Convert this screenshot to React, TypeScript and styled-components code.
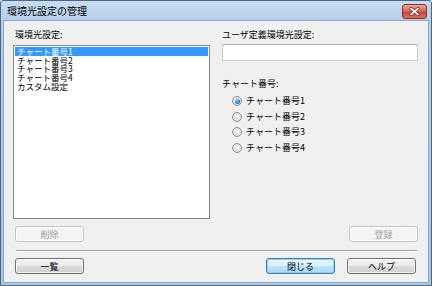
import React from "react";
import styled, { createGlobalStyle } from "styled-components";

const Global = createGlobalStyle`
  html, body { margin: 0; padding: 0; background: #fff; }
  body { font-family: "Noto Sans CJK JP", "Noto Sans", sans-serif; }
  * { box-sizing: border-box; }
`;

const Window = styled.div`
  width: 432px;
  height: 286px;
  display: flex;
  flex-direction: column;
  border: 1px solid #4d6688;
  border-radius: 3px 3px 0 0;
  background: linear-gradient(#c9dcf1, #b4cde9 20px, #a9c6e6);
  padding: 0 2px 2px;
`;

const TitleBar = styled.div`
  height: 19px;
  display: flex;
  align-items: center;
  justify-content: space-between;
  padding: 0 2px 0 4px;
`;

const Title = styled.div`
  font-size: 10px;
  line-height: 12px;
  color: #000;
`;

const CloseBtn = styled.div`
  width: 25px;
  height: 15px;
  margin-top: 1px;
  border: 1px solid #8a2f25;
  border-radius: 3px;
  background: linear-gradient(#e9a99c, #d5634f 50%, #c64330 51%, #d8705c);
  display: flex;
  align-items: center;
  justify-content: center;
`;

const Body = styled.div`
  flex: 1;
  display: flex;
  flex-direction: column;
  background: #f0f0f0;
  border: 1px solid #8aa8c8;
  padding: 8px 10px 8px 9px;
  font-size: 9px;
  color: #000;
`;

const Columns = styled.div`
  flex: 1;
  display: grid;
  grid-template-columns: 197px 196px;
  column-gap: 12px;
`;

const Column = styled.div`
  display: flex;
  flex-direction: column;
  min-height: 0;
`;

const Label = styled.div<{ $indent?: number }>`
  line-height: 12px;
  height: 12px;
  padding-left: ${(p) => p.$indent ?? 2}px;
  white-space: nowrap;
`;

const ListBox = styled.div`
  flex: 1;
  margin-top: 4px;
  background: #fff;
  border: 1px solid #828790;
  padding: 1px;
`;

const ListItem = styled.div<{ $selected?: boolean }>`
  height: 8.7px;
  line-height: 8.7px;
  font-size: 8.5px;
  padding-left: 2px;
  white-space: nowrap;
  background: ${(p) => (p.$selected ? "#3399ff" : "transparent")};
  color: ${(p) => (p.$selected ? "#fff" : "#000")};
`;

const TextInput = styled.div`
  margin-top: 3px;
  height: 17px;
  background: #fff;
  border: 1px solid #c9cdd3;
  border-top-color: #abadb3;
`;

const GroupLabel = styled(Label)`
  margin-top: 17px;
`;

const RadioList = styled.div`
  display: flex;
  flex-direction: column;
  gap: 5.5px;
  margin-top: 6px;
  padding-left: 10px;
`;

const RadioRow = styled.div`
  display: flex;
  align-items: center;
  gap: 4px;
  height: 10px;
  line-height: 10px;
  white-space: nowrap;
`;

const RadioCircle = styled.span<{ $checked?: boolean }>`
  width: 10px;
  height: 10px;
  border-radius: 50%;
  border: 1px solid #8e8f8f;
  background: radial-gradient(circle at 50% 40%, #f4f4f4, #d8d8d8);
  display: flex;
  align-items: center;
  justify-content: center;
  &::after {
    content: "";
    width: 5px;
    height: 5px;
    border-radius: 50%;
    display: ${(p) => (p.$checked ? "block" : "none")};
    background: radial-gradient(circle at 40% 35%, #7fd0ff, #1c6fb8 70%, #114a82);
  }
`;

const Spacer = styled.div`
  flex: 1;
`;

const ButtonRow = styled.div<{ $align?: string }>`
  display: flex;
  justify-content: ${(p) => p.$align ?? "flex-start"};
  gap: 12px;
  padding-left: 2px;
`;

const Button = styled.div<{ $disabled?: boolean; $default?: boolean }>`
  width: 69px;
  height: 16px;
  display: flex;
  align-items: center;
  justify-content: center;
  font-size: 9px;
  border-radius: 3px;
  border: 1px solid
    ${(p) => (p.$disabled ? "#c5c5c5" : p.$default ? "#3c7fb1" : "#707070")};
  color: ${(p) => (p.$disabled ? "#a0a0a0" : "#000")};
  background: ${(p) =>
    p.$disabled
      ? "#f4f4f4"
      : p.$default
      ? "linear-gradient(#eaf6fd, #d9f0fc 50%, #bee6fd 51%, #a7d9f5)"
      : "linear-gradient(#f2f2f2, #ebebeb 50%, #dddddd 51%, #cfcfcf)"};
  box-shadow: ${(p) =>
    p.$default ? "inset 0 0 0 1px #8fd1f5" : "inset 0 0 0 1px rgba(255,255,255,0.7)"};
`;

const TopButtonRow = styled(ButtonRow)`
  margin-top: 7px;
`;

const Separator = styled.div`
  margin: 8px 1px 0 3px;
  height: 2px;
  border-top: 1px solid #a0a0a0;
  border-bottom: 1px solid #fff;
`;

const BottomBar = styled.div`
  display: flex;
  justify-content: space-between;
  margin-top: 6px;
  padding-left: 2px;
  padding-right: 2px;
`;

const BottomRight = styled.div`
  display: flex;
  gap: 12px;
`;

const listItems = ["チャート番号1", "チャート番号2", "チャート番号3", "チャート番号4", "カスタム設定"];
const radios = ["チャート番号1", "チャート番号2", "チャート番号3", "チャート番号4"];

export default function App() {
  return (
    <>
      <Global />
      <Window>
        <TitleBar>
          <Title>環境光設定の管理</Title>
          <CloseBtn>
            <svg width="11" height="9" viewBox="0 0 11 9">
              <path d="M2 1.5 L9 7.5 M9 1.5 L2 7.5" stroke="#5a1a12" strokeWidth="3" strokeLinecap="round" />
              <path d="M2 1.5 L9 7.5 M9 1.5 L2 7.5" stroke="#fff" strokeWidth="1.8" strokeLinecap="round" />
            </svg>
          </CloseBtn>
        </TitleBar>
        <Body>
          <Columns>
            <Column>
              <Label>環境光設定:</Label>
              <ListBox>
                {listItems.map((t, i) => (
                  <ListItem key={t} $selected={i === 0}>
                    {t}
                  </ListItem>
                ))}
              </ListBox>
              <TopButtonRow>
                <Button $disabled>削除</Button>
              </TopButtonRow>
            </Column>
            <Column>
              <Label $indent={0}>ユーザ定義環境光設定:</Label>
              <TextInput />
              <GroupLabel $indent={0}>チャート番号:</GroupLabel>
              <RadioList>
                {radios.map((t, i) => (
                  <RadioRow key={t}>
                    <RadioCircle $checked={i === 0} />
                    {t}
                  </RadioRow>
                ))}
              </RadioList>
              <Spacer />
              <TopButtonRow $align="flex-end">
                <Button $disabled>登録</Button>
              </TopButtonRow>
            </Column>
          </Columns>
          <Separator />
          <BottomBar>
            <Button>一覧</Button>
            <BottomRight>
              <Button $default>閉じる</Button>
              <Button>ヘルプ</Button>
            </BottomRight>
          </BottomBar>
        </Body>
      </Window>
    </>
  );
}
